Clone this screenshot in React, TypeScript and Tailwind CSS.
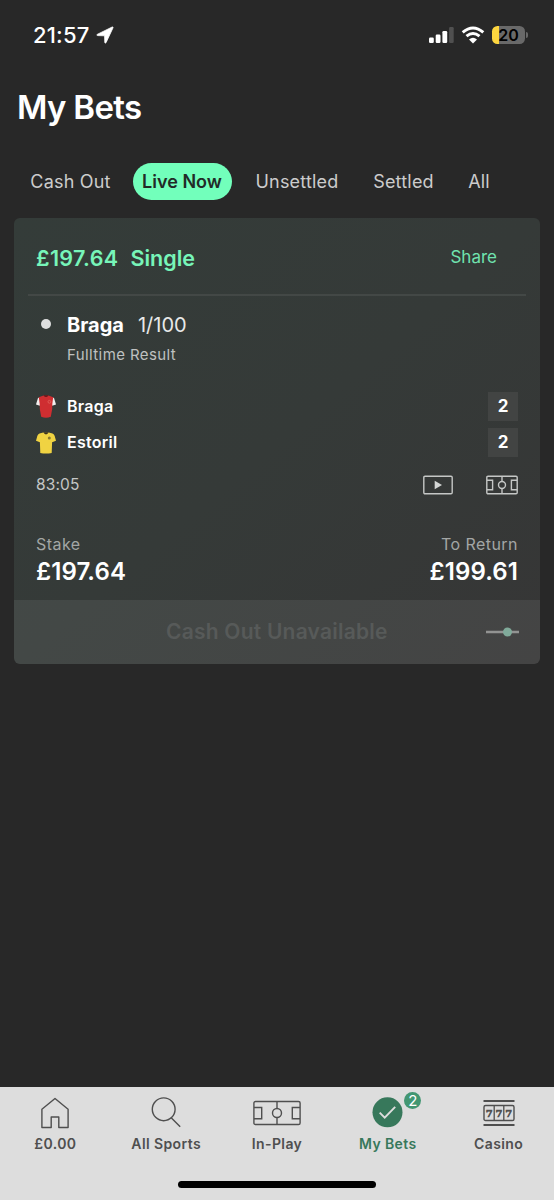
import clsx from 'clsx'
import type { ReactNode } from 'react'

const tabs = [
  { label: 'Cash Out', className: 'ml-[31px] w-[79px]' },
  { label: 'Live Now', className: 'ml-[22.5px] w-[99px]', active: true },
  { label: 'Unsettled', className: 'ml-[23.5px] w-[84px]' },
  { label: 'Settled', className: 'ml-[34px] w-[61px]' },
  { label: 'All', className: 'ml-[34px] w-[22px]' },
]

const teams = [
  { name: 'Braga', score: 2, shirt: <RedShirt /> },
  { name: 'Estoril', score: 2, shirt: <YellowShirt /> },
]

const navItems = [
  { label: '£0.00', icon: <HomeIcon /> },
  { label: 'All Sports', icon: <SearchIcon /> },
  { label: 'In-Play', icon: <PitchIcon className="h-[26px] w-[48px]" /> },
  { label: 'My Bets', icon: <CheckIcon />, badge: 2, active: true },
  { label: 'Casino', icon: <CasinoIcon /> },
]

function RedShirt() {
  return (
    <svg viewBox="0 0 20 23" className="h-[23px] w-[20px]">
      <path d="M4.500 2 2 3 0 9.500l3.800 1.300L5.500 7Z" fill="#f1eeee" />
      <path d="m15.500 2 2.500 1L20 9.500l-3.800 1.300L14.500 7Z" fill="#f1eeee" />
      <path d="M2.800 2.200 7.500.5h5l4.700 1.700L16.300 9l-.1 5-1.400 7.800q-4.800 1.800-9.600 0L3.800 14 3.700 9Z" fill="#cf2e31" />
      <path d="M7.400.3h5.200Q11.800 2 10 2T7.400.3Z" fill="#5f1719" />
      <circle cx="13.400" cy="6.800" r="1.400" fill="none" stroke="#e26a62" strokeWidth=".7" />
    </svg>
  )
}

function YellowShirt() {
  return (
    <svg viewBox="0 0 20 22" className="h-[22px] w-[20px]">
      <path
        d="M7.200.4 3.500 1.500Q1.800 2.100 1.300 4L0 8.800l3.900 1.500.4 10.700q5.700 1 11.400 0l.4-10.700L20 8.800 18.700 4q-.5-1.900-2.200-2.500L12.800.4Z"
        fill="#f0d342"
      />
      <path d="M7.400.3h5.200Q11.800 2.400 10 2.400T7.400.3Z" fill="#3a3320" />
      <circle cx="13.300" cy="6" r="1.500" fill="#8a7a30" />
    </svg>
  )
}

function PitchIcon({ className }: { className?: string }) {
  return (
    <svg viewBox="0 0 48 26" className={className} fill="none" stroke="currentColor" strokeWidth="1.400">
      <rect x=".9" y="1.500" width="46.200" height="23" rx="1.600" />
      <path d="M24 1.500v7M24 17.500v7M1 7.500h7.700v11.200H1M47 7.500h-7.700v11.200H47" />
      <circle cx="24" cy="13" r="4.500" />
    </svg>
  )
}

function SmallPitchIcon() {
  return (
    <svg viewBox="0 0 32 20" className="h-[20px] w-[32px]" fill="none" stroke="#c5c7c6" strokeWidth="1.400">
      <rect x=".8" y="1.200" width="30.400" height="17.600" rx="1.200" />
      <path d="M16 1.200v5.600M16 13.200v5.600M1 5.200h5.600v9.600H1M31 5.200h-5.600v9.600H31" />
      <circle cx="16" cy="10" r="3.500" />
    </svg>
  )
}

function VideoIcon() {
  return (
    <svg viewBox="0 0 30 20" className="h-[20px] w-[30px]" fill="none">
      <rect x=".8" y="1.200" width="28.400" height="17.600" rx="1.200" stroke="#c5c7c6" strokeWidth="1.400" />
      <path d="M11.700 5.800 19 10l-7.300 4.200Z" fill="#d4d6d5" />
    </svg>
  )
}

function HomeIcon() {
  return (
    <svg viewBox="0 0 30 32" className="h-[32px] w-[30px]" fill="none" stroke="currentColor" strokeWidth="1.400">
      <path d="M15 1.500 1.900 12.300v18.200h9.300V20h7.600v10.500h9.300V12.300Z" strokeLinejoin="round" />
    </svg>
  )
}

function SearchIcon() {
  return (
    <svg viewBox="0 0 30 32" className="h-[32px] w-[30px]" fill="none" stroke="currentColor" strokeWidth="1.400">
      <circle cx="12.700" cy="12.300" r="11.400" />
      <path d="m20.200 20.800 9 9" />
    </svg>
  )
}

function CheckIcon() {
  return (
    <svg viewBox="0 0 32 32" className="h-[32px] w-[32px]" fill="none">
      <circle cx="15.500" cy="15.300" r="15" fill="#37785b" />
      <path d="m7.700 15.600 5 5L23.200 9.800" stroke="#dddddd" strokeWidth="1.900" />
    </svg>
  )
}

function CasinoIcon() {
  return (
    <svg viewBox="0 0 32 28" className="h-[28px] w-[32px]" fill="none" stroke="currentColor">
      <path d="M.5 2h31M.5 26h31" strokeWidth="2" />
      <rect x="1" y="6.500" width="30" height="15" rx="1.600" strokeWidth="1.400" />
      <path d="M11.200 6.500v15M20.800 6.500v15" strokeWidth="1.300" />
      {[6.200, 16, 25.800].map((x) => (
        <text
          key={x}
          x={x}
          y="17.600"
          fontSize="10"
          textAnchor="middle"
          fill="currentColor"
          strokeWidth=".6"
          className="font-['DejaVu_Serif',serif] font-bold"
        >
          7
        </text>
      ))}
    </svg>
  )
}

function StatusBar() {
  return (
    <div className="flex h-[70px] items-center justify-between pr-[26px] pl-[33px]">
      <div className="flex items-center gap-[6px]">
        <span className="text-[22px] leading-[26px] font-medium tracking-[0.2px] text-white">21:57</span>
        <svg viewBox="0 0 18 18" className="h-[18px] w-[18px]">
          <path
            d="M1.200 8.400 16.200 1q1.200-.4.8.8L10 16.700q-.8 1-1.200-.3l-.2-6.600-6.900-.2q-1.500-.3-.5-1.200Z"
            fill="#fff"
            stroke="#fff"
            strokeWidth=".8"
          />
        </svg>
      </div>
      <div className="flex items-center">
        <svg viewBox="0 0 25 18" className="h-[18px] w-[25px]">
          <rect x="0" y="11.500" width="4.800" height="5.500" rx="1.200" fill="#fff" />
          <rect x="6.700" y="8.500" width="4.800" height="8.500" rx="1.200" fill="#fff" />
          <rect x="13.400" y="5" width="4.800" height="12" rx="1.200" fill="#fff" />
          <rect x="20.100" y="1" width="4.600" height="16" rx="1.200" fill="#505050" />
        </svg>
        <svg viewBox="0 0 24 18" className="ml-[7px] h-[18px] w-[24px]" fill="none" stroke="#fff" strokeWidth="3">
          <path d="M1.700 6.300q10.300-8.700 20.600 0M5.500 10.200q6.500-5.400 13 0" />
          <path d="m8 13.400 4 4 4-4q-4-3.300-8 0Z" fill="#fff" stroke="none" />
        </svg>
        <div className="ml-[7px] flex h-[18px] w-[33px] items-center justify-center rounded-[5.500px] bg-linear-to-r from-[#fdd63f] from-20% to-[#696969] to-20%">
          <span className="text-[16px] leading-[18px] font-semibold text-black">20</span>
        </div>
        <div className="ml-[1px] h-[6px] w-[2px] rounded-r-full bg-[#696969]" />
      </div>
    </div>
  )
}

function Tabs() {
  return (
    <div className="flex h-[37px] items-center">
      {tabs.map(({ label, className, active }) => (
        <button
          key={label}
          className={clsx(
            'flex h-[37px] items-center justify-center whitespace-nowrap rounded-full text-[18px]',
            active ? 'bg-[#72ffbb] font-semibold text-[#222b27]' : 'tracking-[0.2px] text-[#cccccc]',
            className,
          )}
        >
          {label}
        </button>
      ))}
    </div>
  )
}

function Amount({ label, value, right }: { label: string; value: string; right?: boolean }) {
  return (
    <div className={right ? 'text-right' : ''}>
      <p className="text-[16px] leading-[22px] tracking-[0.450px] text-[#a3a6a5]">{label}</p>
      <p className="text-[24px] leading-[33px] font-semibold tracking-[0.100px] text-white">{value}</p>
    </div>
  )
}

function BetCard() {
  return (
    <section className="mx-[14px] mt-[18px] h-[446px] overflow-hidden rounded-[6px] bg-linear-to-br from-[#343c39] via-[#353a38] to-[#363636]">
      <div className="mx-[14px] flex h-[78px] items-center justify-between border-b-2 border-[#434846] pr-[29px] pl-[8px]">
        <h2 className="flex pt-[5px] text-[21.500px] font-semibold text-[#77f5b9]">
          <span className="tracking-[0.350px]">£197.64</span>
          <span className="ml-[12px]">Single</span>
        </h2>
        <button className="pt-[3px] text-[17px] text-[#70e3af]">Share</button>
      </div>

      <div className="flex h-[96px] pt-[15px] pl-[27px]">
        <div className="mt-[8px] h-[10px] w-[10px] rounded-full bg-[#dedfdf]" />
        <div className="ml-[16px]">
          <p className="text-[20px] leading-[28px] text-[#e8e9e9]">
            <span className="font-bold text-white">Braga</span>
            <span className="ml-[14px]">1/100</span>
          </p>
          <p className="mt-[4px] text-[15px] leading-[24px] tracking-[0.400px] text-[#bfc1c0]">Fulltime Result</p>
        </div>
      </div>

      <div className="flex flex-col gap-[7px] pr-[22px] pl-[22px]">
        {teams.map(({ name, score, shirt }) => (
          <div key={name} className="flex h-[29px] items-center">
            {shirt}
            <span className="ml-[11px] pb-[2px] text-[16px] font-semibold tracking-[0.250px] text-white">{name}</span>
            <span className="ml-auto flex h-[29px] w-[30px] items-center justify-center bg-[#424443] text-[17px] font-bold text-white">
              {score}
            </span>
          </div>
        ))}
      </div>

      <div className="flex h-[56px] items-center pr-[22.500px] pl-[22px]">
        <span className="text-[15.500px] tracking-[0.150px] text-[#c5c7c6]">83:05</span>
        <div className="ml-auto flex gap-[33px]">
          <VideoIcon />
          <SmallPitchIcon />
        </div>
      </div>

      <div className="flex h-[87px] justify-between pt-[20px] pr-[22px] pl-[22px]">
        <Amount label="Stake" value="£197.64" />
        <Amount label="To Return" value="£199.61" right />
      </div>

      <div className="flex h-[64px] items-center justify-between bg-white/7 pr-[21.500px] pl-[152px]">
        <span className="text-[21px] font-semibold tracking-[0.220px] text-[#575a59]">Cash Out Unavailable</span>
        <svg viewBox="0 0 33 10" className="h-[10px] w-[33px]">
          <path d="M0 5h33" stroke="#929392" strokeWidth="2.400" />
          <circle cx="21.500" cy="5" r="4.500" fill="#80aa9a" />
        </svg>
      </div>
    </section>
  )
}

function NavButton({ label, icon, badge, active }: { label: string; icon: ReactNode; badge?: number; active?: boolean }) {
  return (
    <button className={clsx('flex flex-1 flex-col items-center', active ? 'text-[#37785b]' : 'text-[#4f4f4f]')}>
      <div className="relative flex h-[32px] items-center justify-center">
        {icon}
        {badge && (
          <span className="absolute -top-[5px] left-[32.500px] flex h-[17px] w-[17px] items-center justify-center rounded-full bg-[#429672] text-[15px] leading-none text-white">
            {badge}
          </span>
        )}
      </div>
      <span className="mt-[5px] text-[14px] leading-[20px] font-semibold tracking-[0.400px] whitespace-nowrap">{label}</span>
    </button>
  )
}

export default function App() {
  return (
    <div className="flex h-[1200px] w-[554px] flex-col overflow-hidden bg-[#282828] font-['Inter',sans-serif]">
      <StatusBar />
      <h1 className="mb-[33px] ml-[17px] pt-[14px] text-[33px] leading-[46px] font-semibold tracking-[-0.700px] text-white">
        My Bets
      </h1>
      <Tabs />
      <BetCard />

      <nav className="mt-auto h-[113px] bg-[#dddddd]">
        <div className="flex h-[98px] pt-[10px]">
          {navItems.map((item) => (
            <NavButton key={item.label} {...item} />
          ))}
        </div>
        <div className="mx-auto -mt-[4px] h-[7px] w-[198px] rounded-full bg-black" />
      </nav>
    </div>
  )
}
